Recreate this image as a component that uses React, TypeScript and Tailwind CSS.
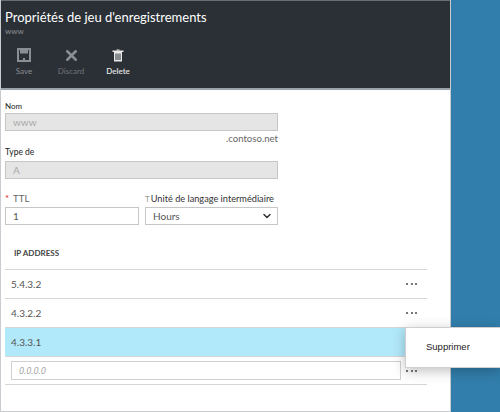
import { ChevronDown, X } from "lucide-react"

const font = { fontFamily: '"Lato", "Liberation Sans", sans-serif' }

function Dots() {
  return (
    <div className="flex gap-[2.5px] mr-[10px] shrink-0">
      <span className="w-[2px] h-[2px] shrink-0 bg-[#777]" />
      <span className="w-[2px] h-[2px] shrink-0 bg-[#777]" />
      <span className="w-[2px] h-[2px] shrink-0 bg-[#777]" />
    </div>
  )
}

function SaveIcon() {
  return (
    <svg width="14" height="14" viewBox="0 0 14 14" fill="none">
      <path d="M1 1h12v12H1z" stroke="#8b8f93" strokeWidth="2" />
      <path d="M3 1.5h8v4H3z" fill="#8b8f93" />
      <path d="M6 10h2v3H6z" fill="#8b8f93" />
    </svg>
  )
}

function TrashIcon() {
  return (
    <svg width="12" height="13" viewBox="0 0 12 13" fill="none">
      <path d="M4.5 0.5h3v1h-3z" fill="#e8e8e8" />
      <path d="M0.5 1.5h11v1.5h-11z" fill="#e8e8e8" />
      <path d="M2 3h8v9.5H2z" fill="#e8e8e8" />
      <path d="M4 4.5v6.5M6 4.5v6.5M8 4.5v6.5" stroke="#2b3036" />
    </svg>
  )
}

function ToolButton({ label, icon, className }: { label: string; icon: React.ReactNode; className: string }) {
  return (
    <div className={`flex flex-col items-center w-[36px] ${className}`}>
      <div className="h-[16px] flex items-center justify-center">{icon}</div>
      <span className="text-[8px] leading-[11px] mt-[3px]">{label}</span>
    </div>
  )
}

function Row({ ip, selected }: { ip: string; selected?: boolean }) {
  return (
    <div className={`h-[29px] flex items-center justify-between pl-[6px] border-b border-[#d6d6d6] text-[10px] text-[#555] ${selected ? "bg-[#b2e9fa]" : ""}`}>
      <span>{ip}</span>
      {!selected && <Dots />}
    </div>
  )
}

export default function App() {
  return (
    <div className="w-[500px] h-[412px] flex bg-[#317eac] overflow-hidden relative" style={font}>
      <div className="w-[451px] h-full bg-white border-r border-b border-l border-[#c8ccd0] shrink-0">
        {/* Header */}
        <div className="h-[90px] bg-[#2b3036] border-t border-[#6a6e72] border-b-2 border-b-[#9aa3aa] text-white pl-[4px] pt-[7px]">
          <h1 className="text-[13px] leading-[19px]">Propriétés de jeu d'enregistrements</h1>
          <div className="text-[8px] leading-[9px] text-[#8b8f93]">www</div>
          <div className="flex gap-[11px] mt-[11px] pl-[1px]">
            <ToolButton label="Save" className="text-[#8b8f93]" icon={<SaveIcon />} />
            <ToolButton label="Discard" className="text-[#6f7377]" icon={<X size={17} strokeWidth={3.5} color="#8b8f93" />} />
            <ToolButton label="Delete" className="text-[#e4e4e4] font-semibold" icon={<TrashIcon />} />
          </div>
        </div>

        {/* Form */}
        <div className="pl-[4px] pt-[9px]">
          <div className="w-[273px]">
            <div className="text-[8px] leading-[14px] text-[#222]">Nom</div>
            <div className="h-[18px] bg-[#e5e5e5] border border-[#c6c6c6] pl-[7px] flex items-center text-[10px] text-[#a8a8a8]">www</div>
            <div className="text-right text-[9.6px] leading-[13px] text-[#666] mt-[1px]">.contoso.net</div>
            <div className="text-[8.5px] leading-[14px] text-[#222]">Type de</div>
            <div className="h-[18px] mt-[2px] bg-[#e5e5e5] border border-[#c6c6c6] pl-[7px] flex items-center text-[10px] text-[#a8a8a8]">A</div>
            <div className="flex gap-[6px] mt-[12px]">
              <div className="w-[134px]">
                <div className="text-[9.6px] leading-[16px] text-[#666]">
                  <span className="text-[#e02020] mr-[4px]">*</span>TTL
                </div>
                <div className="h-[18px] border border-[#c6c6c6] pl-[7px] flex items-center text-[10px] text-[#555]">1</div>
              </div>
              <div className="flex-1 min-w-0">
                <div className="text-[9.2px] leading-[16px] text-[#333] whitespace-nowrap">
                  <span className="text-[#999] text-[8px] mr-[1px]">T</span>Unité de langage intermédiaire
                </div>
                <div className="h-[18px] border border-[#c6c6c6] pl-[7px] pr-[4px] flex items-center justify-between text-[10px] text-[#555]">
                  Hours
                  <ChevronDown size={12} strokeWidth={3} color="#333" />
                </div>
              </div>
            </div>
          </div>

          {/* IP table */}
          <div className="w-[422px] mt-[19px]">
            <div className="h-[26px] pl-[9px] pt-[3px] border-b border-[#d6d6d6] text-[8px] font-bold text-[#444]">IP ADDRESS</div>
            <Row ip="5.4.3.2" />
            <Row ip="4.3.2.2" />
            <Row ip="4.3.3.1" selected />
            <div className="h-[28px] flex items-center justify-between border-b border-[#d6d6d6] pl-[6px]">
              <div className="w-[390px] h-[19px] border border-[#d0d0d0] pl-[7px] flex items-center text-[9px] italic text-[#a0a0a0] font-['Open_Sans']">0.0.0.0</div>
              <Dots />
            </div>
          </div>
        </div>
      </div>

      {/* Context menu */}
      <div className="absolute left-[405px] top-[327px] w-[95px] h-[41px] bg-white border-t border-l border-b border-[#cfcfcf] shadow-[0_3px_12px_rgba(0,0,0,0.25)] pl-[20px] flex items-center text-[9.5px] text-[#222]" style={{ fontFamily: '"Liberation Sans", sans-serif' }}>
        Supprimer
      </div>
    </div>
  )
}
